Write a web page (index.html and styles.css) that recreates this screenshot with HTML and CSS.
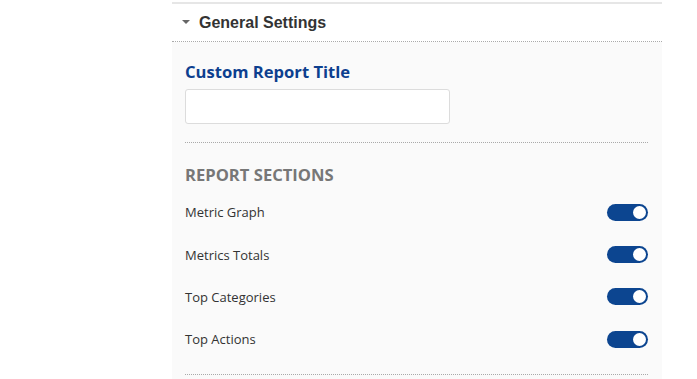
FILE: index.html
```html
<!DOCTYPE html>
<html lang="en">
<head>
  <meta charset="UTF-8">
  <title>Report Settings</title>
  <link rel="stylesheet" href="styles.css">
</head>
<body>

  <!-- Settings panel -->
  <div class="panel">
    <div class="panel-header">
      <span class="caret"></span>
      <span class="panel-title">General Settings</span>
    </div>

    <div class="panel-body">
      <div class="field">
        <label class="field-label" for="report-title">Custom Report Title</label>
        <input type="text" id="report-title" class="text-input">
      </div>

      <div class="sections">
        <h3 class="sections-title">REPORT SECTIONS</h3>
        <div class="toggle-row">
          <span>Metric Graph</span>
          <span class="switch"><span class="knob"></span></span>
        </div>
        <div class="toggle-row">
          <span>Metrics Totals</span>
          <span class="switch"><span class="knob"></span></span>
        </div>
        <div class="toggle-row">
          <span>Top Categories</span>
          <span class="switch"><span class="knob"></span></span>
        </div>
        <div class="toggle-row">
          <span>Top Actions</span>
          <span class="switch"><span class="knob"></span></span>
        </div>
      </div>
    </div>
  </div>

</body>
</html>
```

FILE: styles.css
```css
* {
  box-sizing: border-box;
  margin: 0;
  padding: 0;
}

body {
  background: #fff;
  padding-top: 2px;
  font-family: "Open Sans", sans-serif;
}

.panel {
  margin-left: 172px;
  width: 490px;
  border-top: 2px solid #e6e6e6;
}

.panel-header {
  display: flex;
  align-items: center;
  height: 38px;
  padding-left: 10px;
  background: #fff;
  border-bottom: 1px dotted #aaa;
}

.caret {
  width: 0;
  height: 0;
  border-left: 4px solid transparent;
  border-right: 4px solid transparent;
  border-top: 4px solid #666;
  margin-right: 9px;
  margin-top: -1px;
}

.panel-title {
  font-family: "Liberation Sans", Arial, sans-serif;
  font-weight: bold;
  font-size: 16px;
  color: #333;
}

.panel-body {
  background: #fafafa;
  padding: 0 14px 0 13px;
  height: 340px;
}

.field {
  padding: 19px 0 18px;
  border-bottom: 1px dotted #aaa;
}

.field-label {
  display: block;
  font-weight: bold;
  font-size: 16.6px;
  color: #0d3f8f;
  line-height: 22px;
  margin-bottom: 6px;
}

.text-input {
  width: 265px;
  height: 35px;
  border: 1px solid #dcdcdc;
  border-radius: 3px;
  background: #fff;
  outline: none;
}

.sections {
  padding: 21px 0 13px;
  border-bottom: 1px dotted #aaa;
}

.sections-title {
  font-size: 16.6px;
  font-weight: bold;
  color: #777;
  line-height: 22px;
  margin-bottom: 5px;
}

.toggle-row {
  display: flex;
  justify-content: space-between;
  align-items: center;
  height: 42.4px;
  font-size: 13px;
  color: #333;
}

.switch {
  display: flex;
  justify-content: flex-end;
  align-items: center;
  width: 41px;
  height: 17px;
  padding-right: 2px;
  border-radius: 9px;
  background: #0c4590;
}

.knob {
  width: 13px;
  height: 13px;
  border-radius: 50%;
  background: #fff;
}
```
